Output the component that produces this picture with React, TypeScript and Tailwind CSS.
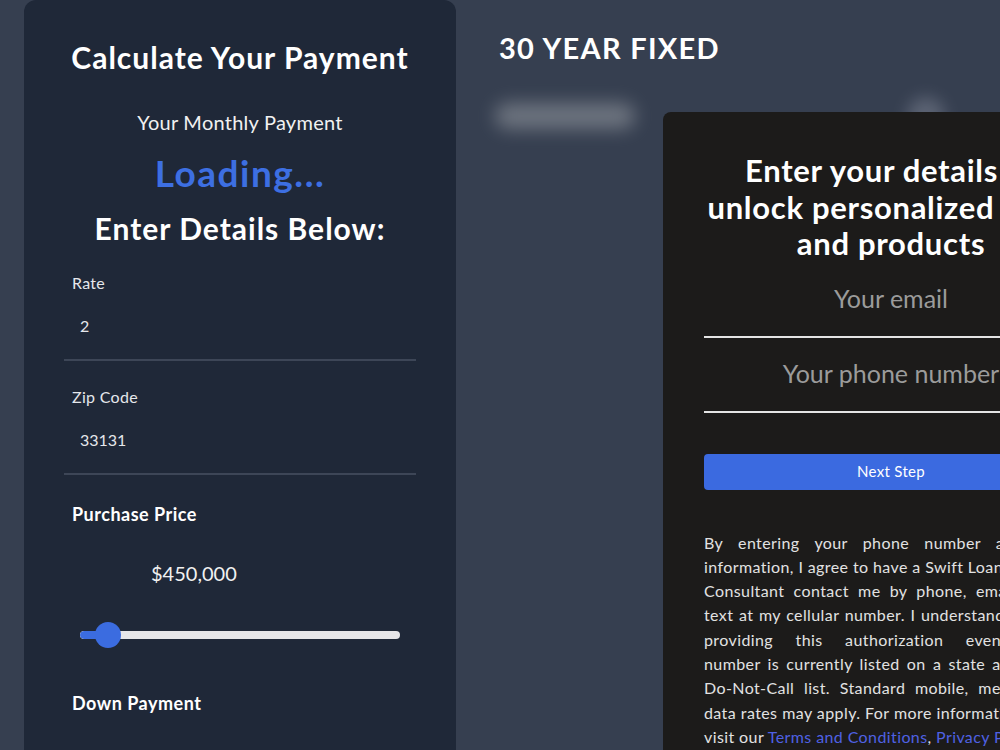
import React from "react";

const disclaimer: string[] = [
  "By entering your phone number and other",
  "information, I agree to have a Swift Loans Mortgage",
  "Consultant contact me by phone, email, and/or",
  "text at my cellular number. I understand that I am",
  "providing this authorization even if my",
  "number is currently listed on a state and federal",
  "Do-Not-Call list. Standard mobile, message and",
  "data rates may apply. For more information, please",
];

function Field({ label, value }: { label: string; value: string }) {
  return (
    <div className="flex flex-col">
      <div className="pl-2 text-[16px] leading-[20px] tracking-[0.3px] text-[#e5e7eb]">{label}</div>
      <div className="flex h-[68px] items-center border-b-2 border-[#3d4657] pl-4 text-[16px] text-[#e5e7eb]">
        {value}
      </div>
    </div>
  );
}

function PriceSlider() {
  return (
    <div className="relative ml-4 mt-[37px] flex h-[26px] w-[320px] items-center">
      <div className="h-[8px] w-full overflow-hidden rounded-full bg-[#e6e6e9]">
        <div className="h-full w-[28px] rounded-full bg-[#3b6ce0]" />
      </div>
      <div className="absolute left-[15px] top-0 h-[26px] w-[26px] rounded-full bg-[#3b6ce0]" />
    </div>
  );
}

function Calculator() {
  return (
    <div className="ml-6 flex h-[760px] w-[432px] shrink-0 flex-col rounded-t-xl bg-[#1f2838] px-10 pt-[39px] text-white">
      <h1 className="text-center text-[30px] font-bold leading-[36px] tracking-[1px]">Calculate Your Payment</h1>
      <p className="mt-[35px] text-center text-[20px] leading-[24px] tracking-[0.25px] text-[#f1f1f1]">
        Your Monthly Payment
      </p>
      <p className="mt-[19px] text-center text-[37px] font-bold leading-[40px] tracking-[1.5px] text-[#3d6fe2]">
        Loading...
      </p>
      <h2 className="mt-[17px] text-center text-[30px] font-bold leading-[36px] tracking-[1px]">Enter Details Below:</h2>

      <div className="mt-[27px]">
        <Field label="Rate" value="2" />
      </div>
      <div className="mt-[26px]">
        <Field label="Zip Code" value="33131" />
      </div>

      <div className="mt-[28px] pl-2 text-[18px] font-bold leading-[22px] tracking-[0.5px]">Purchase Price</div>
      <div className="ml-[87px] mt-[36px] text-[20px] leading-[24px] text-[#f1f1f1]">$450,000</div>
      <PriceSlider />
      <div className="mt-[44px] pl-2 text-[18px] font-bold leading-[22px] tracking-[0.5px]">Down Payment</div>
    </div>
  );
}

function LeadForm() {
  return (
    <div className="absolute left-[663px] top-[112px] w-[456px] rounded-lg bg-[#1c1b1a] px-[41px] pb-10 pt-10 text-white">
      <h2 className="text-center text-[31px] font-bold leading-[36.5px] tracking-[0.7px]">
        Enter your details to
        <br />
        unlock personalized rates
        <br />
        and products
      </h2>
      <div className="flex h-[76px] items-center justify-center border-b-2 border-[#e4e4e4] text-[25px] text-[#9b9b9b]">
        Your email
      </div>
      <div className="flex h-[75px] items-center justify-center border-b-2 border-[#e4e4e4] text-[25px] text-[#9b9b9b]">
        Your phone number
      </div>
      <button className="mt-[41px] flex h-[36px] w-full items-center justify-center rounded bg-[#3b6ae0] text-[15px] tracking-[0.3px] text-white">
        Next Step
      </button>
      <div className="mt-[41px] text-[16px] leading-[24.3px] tracking-[0.4px] text-[#e2e2e2]">
        {disclaimer.map((line, i) => (
          <div key={i} className="whitespace-nowrap text-justify [text-align-last:justify]">
            {line}
          </div>
        ))}
        <div className="whitespace-nowrap">
          visit our <span className="text-[#4f61e3]">Terms and Conditions</span>,{" "}
          <span className="text-[#4f61e3]">Privacy Policy</span>
        </div>
      </div>
    </div>
  );
}

export default function App() {
  return (
    <div className="relative flex h-[750px] w-[1000px] overflow-hidden bg-[#363f50] font-['Lato',sans-serif]">
      <Calculator />
      <div className="ml-[43px] flex flex-1 flex-col pt-[31px]">
        <h1 className="text-[29px] font-bold leading-[34px] tracking-[1.3px] text-white">30 YEAR FIXED</h1>
        <div className="mt-[32px] flex items-center">
          <div className="-ml-1 h-[26px] w-[140px] rounded-full bg-[#80868f] opacity-75 blur-[9px]" />
          <div className="ml-[272px] h-[38px] w-[38px] rounded-full bg-[#6b7282] opacity-70 blur-[8px]" />
        </div>
      </div>
      <LeadForm />
    </div>
  );
}
